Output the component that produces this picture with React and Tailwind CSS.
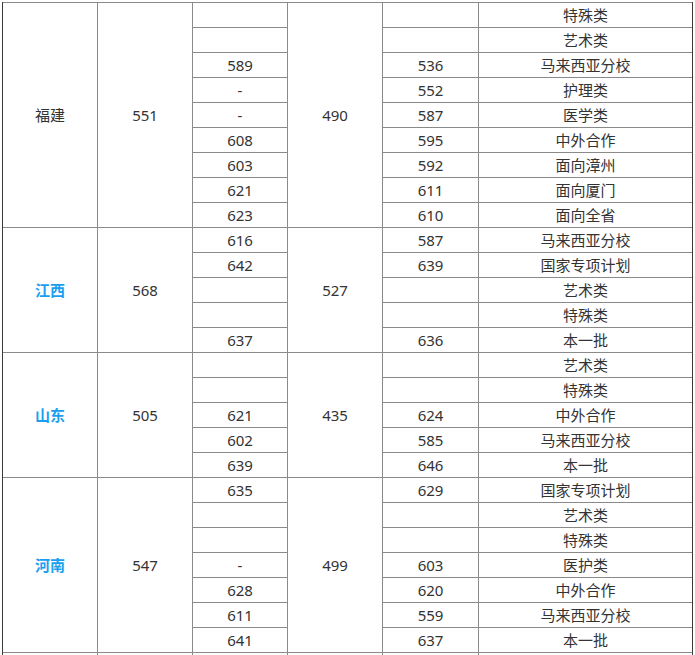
import React from "react";

const groups = [
  {
    name: "福建",
    blue: false,
    a: "551",
    b: "490",
    rows: [
      ["", "", "特殊类"],
      ["", "", "艺术类"],
      ["589", "536", "马来西亚分校"],
      ["-", "552", "护理类"],
      ["-", "587", "医学类"],
      ["608", "595", "中外合作"],
      ["603", "592", "面向漳州"],
      ["621", "611", "面向厦门"],
      ["623", "610", "面向全省"],
    ],
  },
  {
    name: "江西",
    blue: true,
    a: "568",
    b: "527",
    rows: [
      ["616", "587", "马来西亚分校"],
      ["642", "639", "国家专项计划"],
      ["", "", "艺术类"],
      ["", "", "特殊类"],
      ["637", "636", "本一批"],
    ],
  },
  {
    name: "山东",
    blue: true,
    a: "505",
    b: "435",
    rows: [
      ["", "", "艺术类"],
      ["", "", "特殊类"],
      ["621", "624", "中外合作"],
      ["602", "585", "马来西亚分校"],
      ["639", "646", "本一批"],
    ],
  },
  {
    name: "河南",
    blue: true,
    a: "547",
    b: "499",
    rows: [
      ["635", "629", "国家专项计划"],
      ["", "", "艺术类"],
      ["", "", "特殊类"],
      ["-", "603", "医护类"],
      ["628", "620", "中外合作"],
      ["611", "559", "马来西亚分校"],
      ["641", "637", "本一批"],
    ],
  },
];

const spans = { 9: "row-span-9", 5: "row-span-5", 7: "row-span-7" };

function Cell({ children, className = "" }) {
  return (
    <div className={"bg-white flex items-center justify-center " + className}>
      {children}
    </div>
  );
}

export default function App() {
  return (
    <div className="bg-white w-[695px] h-[655px] overflow-hidden pt-[2px] pl-[2px]">
      <div
        className="grid grid-cols-[94px_94px_94px_94px_95px_213px] auto-rows-[24px] gap-px bg-[#8a8a8a] py-px border-x border-[#3a3a3a] w-[691px] text-[15px] text-[#333]"
        style={{ fontFamily: '"Noto Sans", "Noto Sans CJK SC", sans-serif' }}
      >
        {groups.map((g) => {
          const span = spans[g.rows.length];
          return (
            <React.Fragment key={g.name}>
              {g.rows.map((r, i) => (
                <React.Fragment key={i}>
                  {i === 0 && (
                    <>
                      <Cell
                        className={
                          span +
                          (g.blue ? " text-[#1a9ff0] font-bold" : "")
                        }
                      >
                        {g.name}
                      </Cell>
                      <Cell className={span}>{g.a}</Cell>
                    </>
                  )}
                  <Cell>{r[0]}</Cell>
                  {i === 0 && <Cell className={span}>{g.b}</Cell>}
                  <Cell>{r[1]}</Cell>
                  <Cell>{r[2]}</Cell>
                </React.Fragment>
              ))}
            </React.Fragment>
          );
        })}
        <Cell />
        <Cell />
        <Cell />
        <Cell />
        <Cell />
        <Cell />
      </div>
    </div>
  );
}
